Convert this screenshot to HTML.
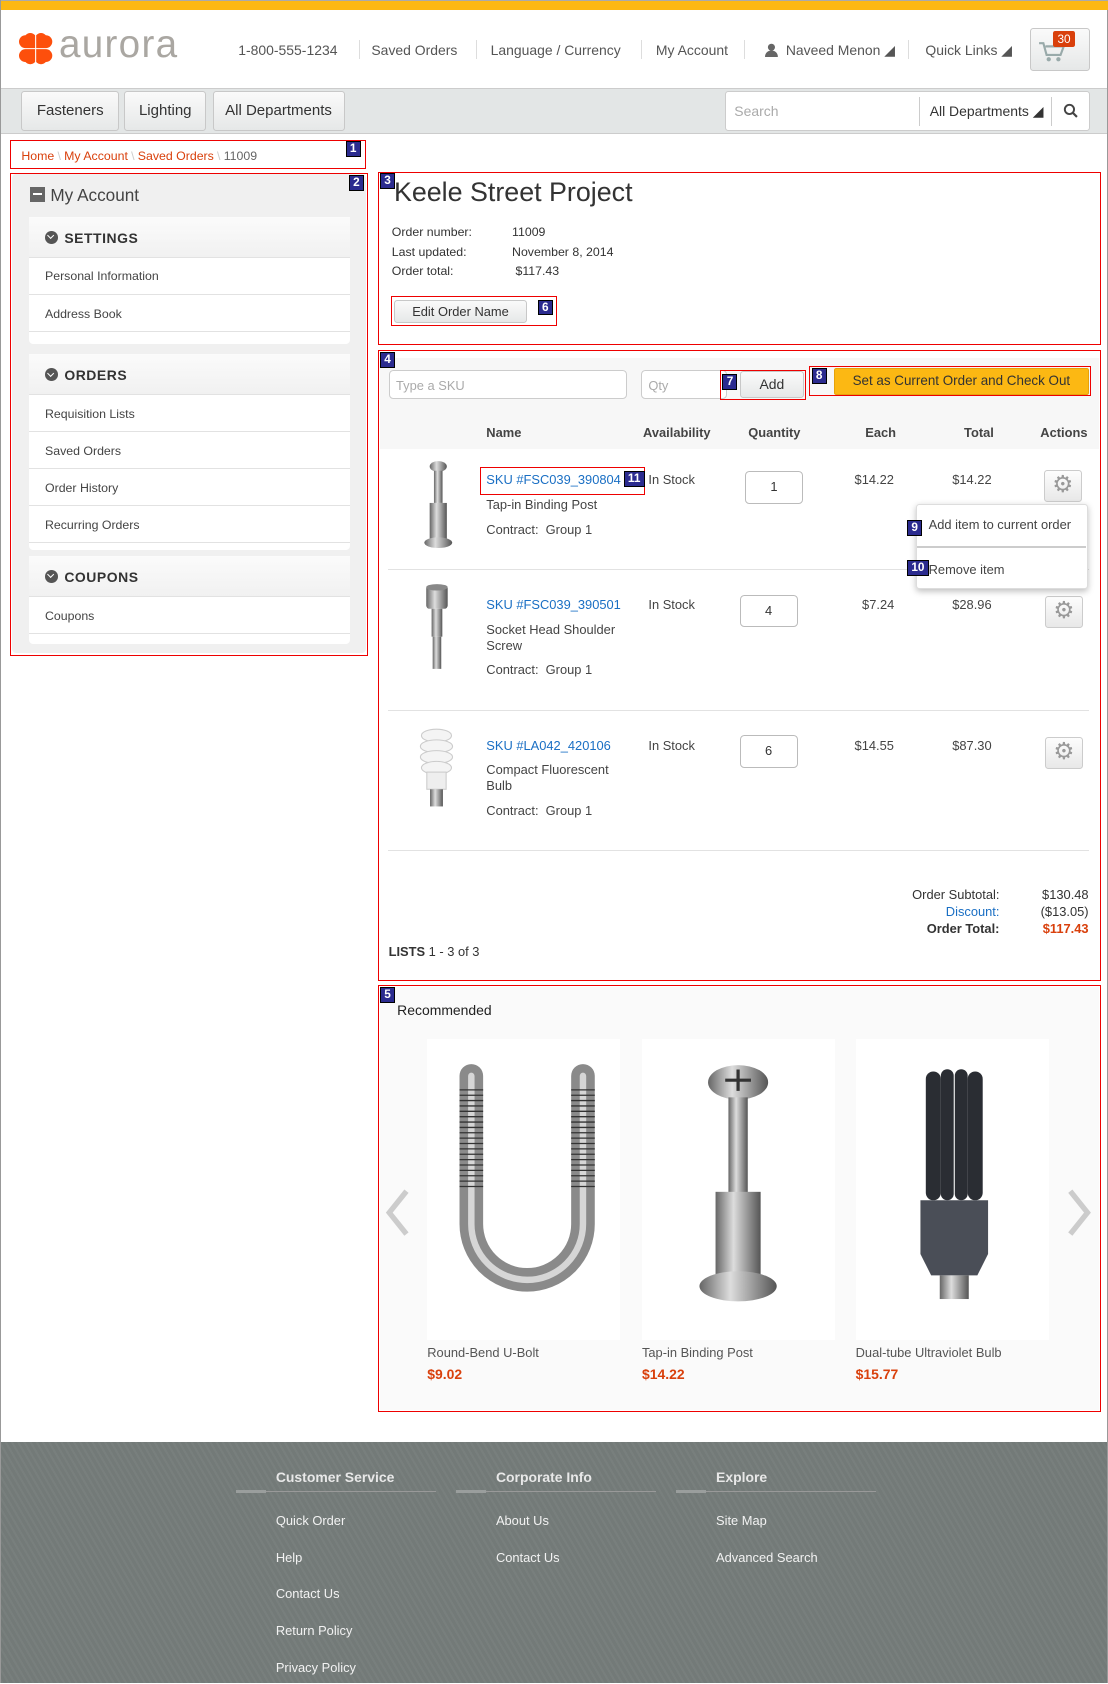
<!DOCTYPE html>
<html><head><meta charset="utf-8">
<style>
*{box-sizing:border-box;margin:0;padding:0}
html,body{width:1108px;height:1684px;overflow:hidden;background:#fff}
#w{zoom:1.07364;width:1032px;height:1568px;position:relative;font-family:"Liberation Sans",Arial,sans-serif;color:#444;font-size:12px;border-left:1px solid #999;border-right:1px solid #999}
.a{position:absolute}
.rb{position:absolute;border:1px solid #e00}
.n{position:absolute;background:#2b2b8f;color:#fff;font-size:11px;font-weight:bold;padding:0 3px;line-height:13px;border:1px solid #000;z-index:5}
.hl{color:#555;font-size:13px}
.sep{position:absolute;top:37px;width:1px;height:18px;background:#ddd}
.btn{position:absolute;border:1px solid #c8c8c8;border-radius:3px;background:linear-gradient(#fafafa,#e6e8e8);font-size:14px;color:#333;text-align:center}
.panel{position:absolute;left:26px;width:299px;background:#fff;border-radius:4px}
.ph{height:38px;background:linear-gradient(#fbfbfb,#f1f1f1);border-bottom:1px solid #e2e2e2;font-weight:bold;font-size:13px;color:#333;padding:12px 0 0 15px;letter-spacing:.5px}
.ph i{display:inline-block;width:12px;height:12px;border-radius:50%;background:#555;vertical-align:-1px;margin-right:6px;position:relative}
.ph i:after{content:"";position:absolute;left:3px;top:2px;width:4px;height:4px;border-right:1.5px solid #fff;border-bottom:1.5px solid #fff;transform:rotate(45deg)}
.pi{height:34.5px;border-bottom:1px solid #e2e2e2;padding:11px 0 0 15px;color:#444;font-size:11.5px}
.lnk{color:#1a6fc4}
.gear{position:absolute;width:36px;height:30px;border:1px solid #ccc;border-radius:3px;background:linear-gradient(#fdfdfd,#e8e8e8);color:#999;font-size:22px;text-align:center;line-height:27px}
.qty{position:absolute;width:54px;height:30px;border:1px solid #bbb;border-radius:4px;text-align:center;line-height:28px;color:#333}
.fh{position:absolute;top:1368px;color:#e8e8e8;font-weight:bold;font-size:13px}
.fl{position:absolute;width:186px;height:1px;background:#999;top:1389px}
.fl:before{content:"";position:absolute;left:0;top:-1px;width:28px;height:3px;background:#9a9e9d}
.fi{position:absolute;color:#f2f2f2;font-size:12px}
.bs{color:#ccc;margin:0 3px}
</style></head><body><div id="w">
<div class="a" style="left:0;top:0;width:1032px;height:9px;background:#fcb813;border-top:1px solid #aaa"></div>
<svg class="a" style="left:17px;top:30px" width="31" height="31" viewBox="0 0 31 31"><g fill="#fd4f0c"><path d="M15 15H6a6 6 0 0 1 0-12 6 6 0 0 1 9 0z"/><path d="M16 15V3a6 6 0 0 1 9 0 6 6 0 0 1 0 12z"/><path d="M15 16v12a6 6 0 0 1-9 0 6 6 0 0 1 0-12z"/><path d="M16 16h9a6 6 0 0 1 0 12 6 6 0 0 1-9 0z"/></g></svg>
<div class="a" style="left:54px;top:21px;font-size:36px;color:#aaa7a2;letter-spacing:1.2px">aurora</div>
<div class="a hl" style="left:221px;top:39px">1-800-555-1234</div><div class="sep" style="left:333px"></div>
<div class="a hl" style="left:345px;top:39px">Saved Orders</div><div class="sep" style="left:442px"></div>
<div class="a hl" style="left:456px;top:39px">Language / Currency</div><div class="sep" style="left:596px"></div>
<div class="a hl" style="left:610px;top:39px">My Account</div><div class="sep" style="left:692px"></div>
<svg class="a" style="left:712px;top:40px" width="12" height="13" viewBox="0 0 12 13"><circle cx="6" cy="4" r="3.3" fill="#666"/><path d="M0 13c0-4 3-6 6-6s6 2 6 6z" fill="#666"/></svg>
<div class="a hl" style="left:731px;top:39px">Naveed Menon ◢</div><div class="sep" style="left:845px"></div>
<div class="a hl" style="left:861px;top:39px">Quick Links ◢</div>
<div class="btn" style="left:958px;top:26px;width:56px;height:40px"></div>
<svg class="a" style="left:966px;top:38px" width="26" height="20" viewBox="0 0 26 20"><path d="M1 2h4l3 11h13l3-8H7" fill="none" stroke="#9aa" stroke-width="2"/><circle cx="10" cy="17" r="2" fill="#9aa"/><circle cx="19" cy="17" r="2" fill="#9aa"/></svg>
<div class="a" style="left:980px;top:29px;background:#d9400c;color:#fff;font-size:11px;padding:1px 4px;border-radius:2px">30</div>
<div class="a" style="left:0;top:82px;width:1030px;height:43px;background:#e3e6e6;border-top:1px solid #ccc;border-bottom:1px solid #ccc"></div>
<div class="btn" style="left:19px;top:85px;width:91px;height:37px;line-height:35px">Fasteners</div>
<div class="btn" style="left:115px;top:85px;width:76px;height:37px;line-height:35px">Lighting</div>
<div class="btn" style="left:197px;top:85px;width:123px;height:37px;line-height:35px">All Departments</div>
<div class="a" style="left:674px;top:85px;width:340px;height:37px;background:#fff;border:1px solid #ccc;border-radius:3px"></div>
<div class="a" style="left:683px;top:96px;font-size:13px;color:#aaa">Search</div>
<div class="a" style="left:855px;top:90px;width:1px;height:27px;background:#ccc"></div>
<div class="a" style="left:865px;top:96px;font-size:13px;color:#333">All Departments ◢</div>
<div class="a" style="left:978px;top:90px;width:1px;height:27px;background:#ccc"></div>
<svg class="a" style="left:989px;top:96px" width="14" height="14" viewBox="0 0 14 14"><circle cx="6" cy="6" r="4.3" fill="none" stroke="#444" stroke-width="1.8"/><path d="M9 9l4 4" stroke="#444" stroke-width="2"/></svg>
<div class="rb" style="left:8px;top:130px;width:332px;height:27px"></div><div class="n" style="left:321px;top:131px">1</div>
<div class="a" style="left:19px;top:139px;font-size:11.5px"><span style="color:#d9400c">Home</span><span class="bs">\</span><span style="color:#d9400c">My Account</span><span class="bs">\</span><span style="color:#d9400c">Saved Orders</span><span class="bs">\</span><span style="color:#666">11009</span></div>
<div class="a" style="left:10px;top:162px;width:330px;height:446px;background:#f0f0f0;border-radius:4px"></div>
<div class="rb" style="left:8px;top:161px;width:334px;height:450px"></div><div class="n" style="left:324px;top:163px">2</div>
<div class="a" style="left:27px;top:174px;width:14px;height:14px;background:#666"><div style="margin:6px 3px;width:8px;height:2px;background:#fff"></div></div>
<div class="a" style="left:46px;top:172px;font-size:16px;color:#444">My Account</div>
<div class="panel" style="top:202px;height:118px"><div class="ph"><i></i>SETTINGS</div><div class="pi">Personal Information</div><div class="pi">Address Book</div></div>
<div class="panel" style="top:330px;height:182px"><div class="ph"><i></i>ORDERS</div><div class="pi">Requisition Lists</div><div class="pi">Saved Orders</div><div class="pi">Order History</div><div class="pi">Recurring Orders</div></div>
<div class="panel" style="top:518px;height:82px"><div class="ph"><i></i>COUPONS</div><div class="pi">Coupons</div></div>
<div class="rb" style="left:351px;top:160px;width:674px;height:161px"></div><div class="n" style="left:353px;top:161px">3</div>
<div class="a" style="left:366px;top:165px;font-size:25px;color:#333">Keele Street Project</div>
<div class="a" style="left:364px;top:208px;line-height:18px;font-size:11.5px;color:#333">Order number:<br>Last updated:<br>Order total:</div>
<div class="a" style="left:476px;top:208px;line-height:18px;font-size:11.5px;color:#333">11009<br>November 8, 2014<br>&nbsp;$117.43</div>
<div class="btn" style="left:366px;top:279px;width:124px;height:22px;font-size:12px;line-height:20px">Edit Order Name</div>
<div class="rb" style="left:363px;top:276px;width:155px;height:28px"></div><div class="n" style="left:500px;top:279px">6</div>
<div class="a" style="left:353px;top:333px;width:670px;height:57px;background:#f7f7f7"></div>
<div class="rb" style="left:351px;top:326px;width:674px;height:588px"></div><div class="n" style="left:353px;top:328px">4</div>
<div class="a" style="left:361px;top:345px;width:222px;height:27px;background:#fff;border:1px solid #ccc;border-radius:4px;padding:6px;color:#aaa;font-size:12px">Type a SKU</div>
<div class="a" style="left:596px;top:345px;width:80px;height:27px;background:#fff;border:1px solid #ccc;border-radius:4px;padding:6px;color:#aaa;font-size:12px">Qty</div>
<div class="btn" style="left:688px;top:346px;width:60px;height:25px;font-size:13px;line-height:23px">Add</div>
<div class="rb" style="left:670px;top:345px;width:80px;height:28px"></div><div class="n" style="left:672px;top:348px">7</div>
<div class="a" style="left:776px;top:343px;width:237px;height:25px;background:#fcb813;border:1px solid #e6a20a;border-radius:2px;text-align:center;line-height:23px;font-size:12.5px;color:#333">Set as Current Order and Check Out</div>
<div class="rb" style="left:753px;top:341px;width:262px;height:28px"></div><div class="n" style="left:755px;top:343px">8</div>
<div class="a" style="left:353px;top:390px;width:670px;height:28px;background:#f7f7f7"></div>
<div class="a" style="left:452px;top:396px;font-weight:bold;color:#444">Name</div>
<div class="a" style="left:598px;top:396px;font-weight:bold;color:#444">Availability</div>
<div class="a" style="left:696px;top:396px;font-weight:bold;color:#444">Quantity</div>
<div class="a" style="left:805px;top:396px;font-weight:bold;color:#444">Each</div>
<div class="a" style="left:897px;top:396px;font-weight:bold;color:#444">Total</div>
<div class="a" style="left:968px;top:396px;font-weight:bold;color:#444">Actions</div>
<svg class="a" style="left:390px;top:428px" width="34" height="84" viewBox="0 0 34 84"><defs><linearGradient id="m" x1="0" x2="1"><stop offset="0" stop-color="#666"/><stop offset=".4" stop-color="#ddd"/><stop offset="1" stop-color="#555"/></linearGradient></defs><ellipse cx="17" cy="6" rx="8" ry="5" fill="url(#m)"/><rect x="13" y="10" width="8" height="30" fill="url(#m)"/><rect x="9" y="40" width="16" height="36" fill="url(#m)"/><ellipse cx="17" cy="77" rx="13" ry="5" fill="url(#m)"/></svg>
<div class="a lnk" style="left:452px;top:440px">SKU #FSC039_390804</div>
<div class="rb" style="left:446px;top:435px;width:154px;height:26px"></div><div class="n" style="left:580px;top:439px">11</div>
<div class="a" style="left:452px;top:463px">Tap-in Binding Post</div>
<div class="a" style="left:452px;top:486px">Contract:&nbsp; Group 1</div>
<div class="a" style="left:603px;top:440px">In Stock</div>
<div class="qty" style="left:693px;top:439px">1</div>
<div class="a" style="left:795px;top:440px">$14.22</div>
<div class="a" style="left:886px;top:440px">$14.22</div>
<div class="gear" style="left:971px;top:438px">⚙</div>
<div class="a" style="left:360px;top:530px;width:653px;height:1px;background:#e2e2e2"></div>
<svg class="a" style="left:393px;top:543px" width="26" height="84" viewBox="0 0 26 84"><rect x="3" y="2" width="20" height="22" rx="3" fill="url(#m)"/><ellipse cx="13" cy="4" rx="10" ry="3" fill="#888"/><rect x="8" y="24" width="10" height="26" fill="url(#m)"/><rect x="9" y="50" width="8" height="30" fill="url(#m)"/></svg>
<div class="a lnk" style="left:452px;top:556px">SKU #FSC039_390501</div>
<div class="a" style="left:452px;top:579px;line-height:15px">Socket Head Shoulder<br>Screw</div>
<div class="a" style="left:452px;top:617px">Contract:&nbsp; Group 1</div>
<div class="a" style="left:603px;top:556px">In Stock</div>
<div class="qty" style="left:688px;top:554px">4</div>
<div class="a" style="left:802px;top:556px">$7.24</div>
<div class="a" style="left:886px;top:556px">$28.96</div>
<div class="gear" style="left:972px;top:555px">⚙</div>
<div class="a" style="left:360px;top:661px;width:653px;height:1px;background:#e2e2e2"></div>
<svg class="a" style="left:386px;top:677px" width="40" height="82" viewBox="0 0 40 82"><g fill="#f4f4f4" stroke="#ccc"><ellipse cx="20" cy="8" rx="14" ry="6"/><ellipse cx="20" cy="18" rx="15" ry="6"/><ellipse cx="20" cy="28" rx="15" ry="6"/><ellipse cx="20" cy="38" rx="14" ry="6"/></g><rect x="11" y="42" width="18" height="16" fill="#eee" stroke="#ccc"/><rect x="14" y="58" width="12" height="16" fill="url(#m)"/></svg>
<div class="a lnk" style="left:452px;top:687px">SKU #LA042_420106</div>
<div class="a" style="left:452px;top:710px;line-height:15px">Compact Fluorescent<br>Bulb</div>
<div class="a" style="left:452px;top:748px">Contract:&nbsp; Group 1</div>
<div class="a" style="left:603px;top:687px">In Stock</div>
<div class="qty" style="left:688px;top:685px">6</div>
<div class="a" style="left:795px;top:687px">$14.55</div>
<div class="a" style="left:886px;top:687px">$87.30</div>
<div class="gear" style="left:972px;top:686px">⚙</div>
<div class="a" style="left:360px;top:792px;width:653px;height:1px;background:#e2e2e2"></div>
<div class="a" style="left:852px;top:469px;width:160px;height:80px;background:#fff;border:1px solid #ddd;border-radius:3px;box-shadow:0 2px 6px rgba(0,0,0,.25)"></div>
<div class="a" style="left:853px;top:509px;width:158px;height:1px;background:#ccc"></div>
<div class="a" style="left:864px;top:482px">Add item to current order</div>
<div class="a" style="left:864px;top:523px">Remove item</div>
<div class="n" style="left:844px;top:484px">9</div><div class="n" style="left:844px;top:522px">10</div>
<div class="a" style="left:800px;top:825px;width:130px;text-align:right;line-height:16px;color:#333">Order Subtotal:<br><span class="lnk">Discount:</span><br><b>Order Total:</b></div>
<div class="a" style="left:940px;top:825px;width:73px;text-align:right;line-height:16px;color:#333">$130.48<br>($13.05)<br><b style="color:#d9400c">$117.43</b></div>
<div class="a" style="left:361px;top:879px;color:#333"><b>LISTS</b> 1 - 3 of 3</div>
<div class="a" style="left:353px;top:919px;width:670px;height:394px;background:#fafafa"></div>
<div class="rb" style="left:351px;top:917px;width:674px;height:398px"></div><div class="n" style="left:353px;top:919px">5</div>
<div class="a" style="left:369px;top:933px;font-size:13px;color:#222">Recommended</div>
<div class="a" style="left:397px;top:968px;width:180px;height:280px;background:#fff"></div>
<div class="a" style="left:597px;top:968px;width:180px;height:280px;background:#fff"></div>
<div class="a" style="left:796px;top:968px;width:180px;height:280px;background:#fff"></div>
<svg class="a" style="left:420px;top:990px" width="140" height="225" viewBox="0 0 140 225"><path d="M18 12V150a52 52 0 0 0 104 0V12" fill="none" stroke="#8a8a8a" stroke-width="22" stroke-linecap="round"/><path d="M18 12V150a52 52 0 0 0 104 0V12" fill="none" stroke="#d6d6d6" stroke-width="6" stroke-linecap="round"/><g stroke="#333" stroke-width="1.2"><path d="M7 25h22M7 30h22M7 35h22M7 40h22M7 45h22M7 50h22M7 55h22M7 60h22M7 65h22M7 70h22M7 75h22M7 80h22M7 85h22M7 90h22M7 95h22M7 100h22M7 105h22M7 110h22M7 115h22M111 25h22M111 30h22M111 35h22M111 40h22M111 45h22M111 50h22M111 55h22M111 60h22M111 65h22M111 70h22M111 75h22M111 80h22M111 85h22M111 90h22M111 95h22M111 100h22M111 105h22M111 110h22M111 115h22"/></g></svg>
<svg class="a" style="left:645px;top:990px" width="85" height="225" viewBox="0 0 85 225"><ellipse cx="42" cy="18" rx="28" ry="16" fill="url(#m)"/><path d="M30 16h24M42 6v20" stroke="#333" stroke-width="3"/><rect x="33" y="32" width="18" height="90" fill="url(#m)"/><rect x="21" y="120" width="42" height="85" fill="url(#m)"/><ellipse cx="42" cy="208" rx="36" ry="14" fill="url(#m)"/></svg>
<svg class="a" style="left:850px;top:992px" width="75" height="220" viewBox="0 0 75 220"><g fill="#2a2d33"><rect x="11" y="6" width="14" height="120" rx="7"/><rect x="25" y="4" width="12" height="122" rx="6"/><rect x="38" y="4" width="12" height="122" rx="6"/><rect x="50" y="6" width="14" height="120" rx="7"/></g><path d="M6 126h63v50l-10 20H16L6 176z" fill="#4a4e57"/><rect x="24" y="196" width="27" height="22" fill="url(#m)"/></svg>
<svg class="a" style="left:358px;top:1107px" width="24" height="44" viewBox="0 0 24 44"><path d="M20 2L4 22l16 20" fill="none" stroke="#ccc" stroke-width="5"/></svg>
<svg class="a" style="left:992px;top:1107px" width="24" height="44" viewBox="0 0 24 44"><path d="M4 2l16 20L4 42" fill="none" stroke="#ccc" stroke-width="5"/></svg>
<div class="a" style="left:397px;top:1253px;color:#555">Round-Bend U-Bolt</div>
<div class="a" style="left:597px;top:1253px;color:#555">Tap-in Binding Post</div>
<div class="a" style="left:796px;top:1253px;color:#555">Dual-tube Ultraviolet Bulb</div>
<div class="a" style="left:397px;top:1272px;color:#d9400c;font-weight:bold;font-size:13px">$9.02</div>
<div class="a" style="left:597px;top:1272px;color:#d9400c;font-weight:bold;font-size:13px">$14.22</div>
<div class="a" style="left:796px;top:1272px;color:#d9400c;font-weight:bold;font-size:13px">$15.77</div>
<div class="a" style="left:0;top:1343px;width:1030px;height:225px;background:#737a78 repeating-linear-gradient(60deg,rgba(255,255,255,.04) 0 2px,transparent 2px 5px)"></div>
<div class="fh" style="left:256px">Customer Service</div><div class="fl" style="left:219px"></div>
<div class="fh" style="left:461px">Corporate Info</div><div class="fl" style="left:424px"></div>
<div class="fh" style="left:666px">Explore</div><div class="fl" style="left:629px"></div>
<div class="fi" style="left:256px;top:1409px">Quick Order</div>
<div class="fi" style="left:256px;top:1444px">Help</div>
<div class="fi" style="left:256px;top:1477px">Contact Us</div>
<div class="fi" style="left:256px;top:1512px">Return Policy</div>
<div class="fi" style="left:256px;top:1546px">Privacy Policy</div>
<div class="fi" style="left:461px;top:1409px">About Us</div>
<div class="fi" style="left:461px;top:1444px">Contact Us</div>
<div class="fi" style="left:666px;top:1409px">Site Map</div>
<div class="fi" style="left:666px;top:1444px">Advanced Search</div>
</div></body></html>
